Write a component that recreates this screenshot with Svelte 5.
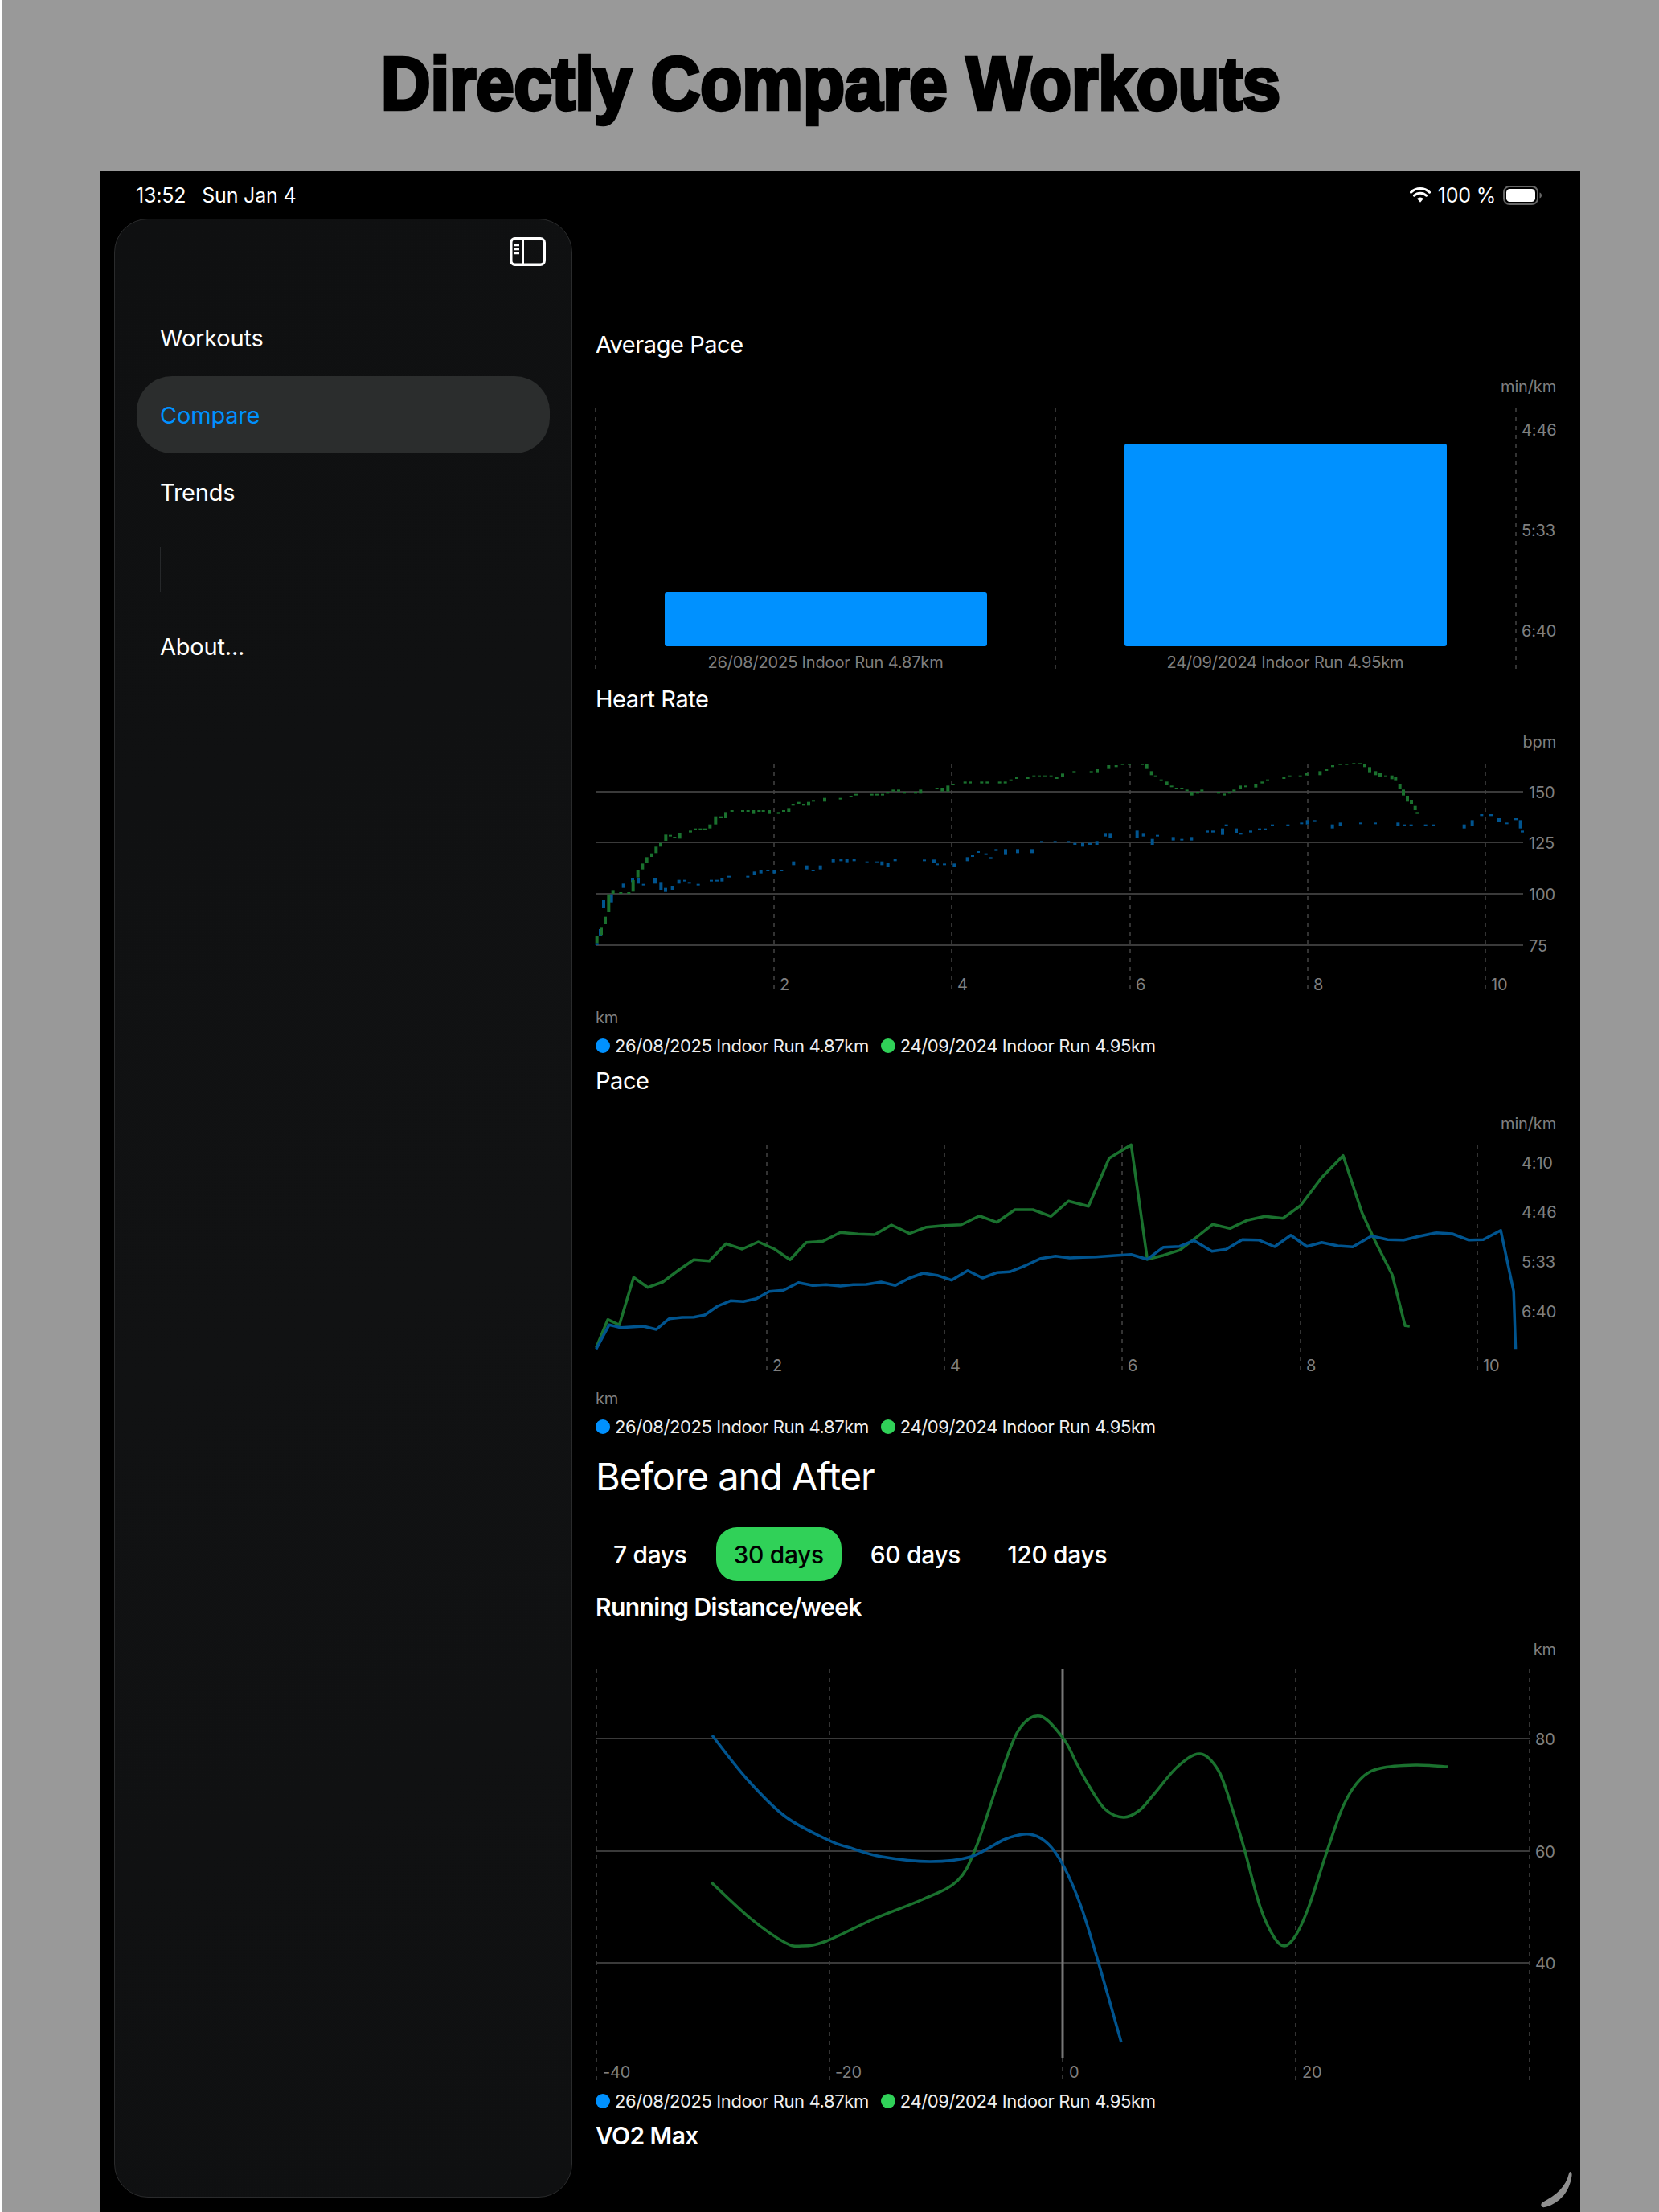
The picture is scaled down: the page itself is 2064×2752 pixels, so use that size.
<script lang="ts">
  type Pt = [number, number];
  type Tick = [number, number, number];

  const sideNav = ['Workouts', 'Compare', 'Trends', '', 'About...'];
  const ranges = ['7 days', '30 days', '60 days', '120 days'];
  const workoutA = '26/08/2025 Indoor Run 4.87km';
  const workoutB = '24/09/2024 Indoor Run 4.95km';

  // points were traced from a crop, so they come with the crop's origin and scale
  const traced = (pts: Pt[], x0: number, sx: number, y0: number, sy: number): Pt[] =>
    pts.map(([h, v]) => [x0 + h / sx, y0 + v / sy]);

  const ticks = (rows: Tick[], x0: number, y0: number): Tick[] =>
    rows.map(([h, a, b]) => [x0 + h / 3, y0 + a / 3, (b - a) / 3]);

  function linePath(pts: Pt[]) {
    return pts.map(([x, y], i) => `${i ? 'L' : 'M'}${x.toFixed(1)} ${y.toFixed(1)}`).join(' ');
  }

  // Catmull-Rom, the charts use a smooth interpolation for the before/after curves
  function smoothPath(pts: Pt[]) {
    let d = `M${pts[0][0]} ${pts[0][1]}`;
    for (let i = 0; i < pts.length - 1; i++) {
      const p0 = pts[i - 1] ?? pts[i];
      const p1 = pts[i];
      const p2 = pts[i + 1];
      const p3 = pts[i + 2] ?? p2;
      const c1x = p1[0] + (p2[0] - p0[0]) / 6;
      const c1y = p1[1] + (p2[1] - p0[1]) / 6;
      const c2x = p2[0] - (p3[0] - p1[0]) / 6;
      const c2y = p2[1] - (p3[1] - p1[1]) / 6;
      d += ` C${c1x.toFixed(1)} ${c1y.toFixed(1)} ${c2x.toFixed(1)} ${c2y.toFixed(1)} ${p2[0]} ${p2[1]}`;
    }
    return d;
  }

  const hrGreen: Tick[] = [
    ...ticks([[68,793,820],[84,760,790],[99,722,750],[112,638,705],[128,622,636],[157,630,636],[187,630,636],[203,585,628],[221,546,575],[238,523,545],[254,499,522],[273,485,498],[289,460,484],[306,446,460],[325,415,438],[342,416,422],[358,423,429],[377,408,430],[417,400,407],[435,392,399],[454,392,399],[471,392,399],[490,377,392],[511,347,377],[531,347,354],[549,331,354],[572,324,330],[612,324,330],[632,324,330],[652,324,338],[673,324,330],[689,324,330],[711,324,338],[746,331,338],[765,324,330],[784,316,330],[800,300,307],[821,293,300],[840,300,307],[858,293,307],[876,286,292],[918,278,292],[977,278,284],[1016,270,276],[1035,263,269],[1094,263,269],[1113,263,269],[1134,263,269],[1153,255,262],[1174,247,254],[1194,247,254],[1215,255,262],[1257,255,262]], 720, 900),
    ...ticks([[76,127,142],[137,120,126],[157,120,134],[178,112,134],[197,105,111],[242,97,104],[261,97,104],[304,97,104],[325,97,104],[371,97,104],[392,97,104],[413,89,95],[435,81,87],[476,81,87],[499,74,80],[519,74,80],[540,74,80],[563,74,80],[584,81,87],[606,67,81],[649,58,65],[713,58,65],[735,51,65],[778,36,50],[806,36,43],[830,30,35],[855,30,35],[903,30,35],[920,30,50],[938,58,73],[953,74,80],[974,89,95],[995,97,111],[1013,112,118],[1031,120,126],[1051,120,126],[1070,127,133],[1088,135,149],[1110,135,142],[1126,127,134],[1188,135,142]], 1120, 940),
    ...ticks([[39,142,149],[59,135,142],[76,127,134],[99,112,126],[120,112,118],[157,105,119],[181,97,104],[201,89,95],[262,81,87],[284,74,80],[323,74,80],[347,66,74],[397,58,73],[421,51,57],[444,36,43],[472,30,35],[496,30,35],[523,28,31],[546,28,31],[564,30,43],[582,43,65],[604,58,73],[621,66,81],[642,74,80],[665,74,88],[679,81,95],[695,105,126],[708,127,149],[723,150,172],[738,165,180],[752,188,204],[760,211,218]], 1510, 940)
  ];

  const hrBlue: Tick[] = [
    ...ticks([[68,820,828],[81,768,792],[93,660,690],[122,638,668],[167,598,614],[201,576,592],[222,576,598],[242,599,605],[285,576,598],[307,592,621],[324,614,629],[350,606,621],[374,584,598],[396,584,590],[413,592,598],[446,599,605],[495,584,590],[516,584,590],[535,576,590],[561,569,575],[631,569,575],[656,553,567],[680,546,560],[706,546,552],[730,546,560],[757,546,552],[802,515,529],[851,530,545],[875,546,552],[902,530,545],[950,507,521],[979,507,514],[1001,507,521],[1028,507,514],[1076,515,521],[1113,515,521],[1132,515,529],[1154,522,537],[1181,507,514]], 720, 900),
    ...ticks([[90,388,394],[126,388,402],[138,403,409],[165,403,409],[202,403,417],[251,379,394],[270,372,378],[291,357,363],[320,365,371],[338,379,386],[358,349,356],[393,349,371],[438,349,364],[492,349,364],[528,319,325],[578,319,325],[628,319,325],[652,326,333],[681,326,340],[708,326,333],[734,319,333],[765,289,302],[784,289,309],[884,280,309],[908,289,302],[941,311,333],[960,296,302],[1019,304,317],[1051,311,317],[1087,304,317],[1146,280,287],[1167,280,287]], 1120, 940),
    ...ticks([[33,272,296],[47,257,264],[84,272,288],[101,288,295],[138,280,287],[171,272,279],[192,272,279],[219,257,264],[277,257,264],[328,250,256],[350,241,257],[377,241,248],[443,257,272],[473,250,264],[549,250,256],[603,250,256],[688,250,264],[711,257,264],[737,257,264],[791,257,264],[819,257,264],[935,257,272],[965,241,264],[1000,219,226],[1035,219,226],[1065,234,249],[1094,250,256],[1128,234,241],[1145,241,272],[1152,280,287]], 1510, 940)
  ];

  const paceGreen = traced([[27,1040],[45,935],[63,955],[85,778],[107,815],[130,795],[155,750],[178,712],[202,716],[228,652],[253,672],[278,645],[303,672],[327,712],[352,647],[378,643],[405,610],[432,616],[458,618],[484,582],[512,614],[538,590],[565,584],[592,581],[620,548],[647,572],[675,525],[703,525],[731,550],[758,493],[789,512],[821,333],[855,283],[880,710],[905,695],[930,676],[955,630],[981,580],[1008,595],[1034,565],[1062,550],[1090,557],[1117,510],[1150,405],[1183,323],[1212,535],[1232,640],[1259,768],[1279,958],[1286,960]], 720, 1.244, 1330, 3);

  const paceBlue = traced([[27,1045],[47,955],[65,965],[100,960],[120,972],[140,932],[160,927],[178,926],[195,918],[215,885],[235,865],[255,868],[275,857],[295,830],[317,826],[340,797],[362,808],[383,805],[405,810],[425,805],[445,804],[468,795],[490,808],[512,780],[533,762],[555,770],[577,788],[602,752],[625,780],[647,760],[667,757],[690,735],[715,707],[738,698],[760,705],[780,703],[800,701],[830,696],[855,692],[880,710],[905,665],[930,662],[952,640],[980,680],[1002,673],[1027,637],[1052,638],[1077,663],[1102,620],[1127,662],[1150,647],[1175,660],[1198,664],[1227,623],[1252,637],[1277,638],[1300,625],[1327,611],[1352,615],[1377,638],[1400,637],[1427,602],[1447,830],[1450,1045]], 720, 1.244, 1330, 3);

  const distGreen: Pt[] = [[885,2342],[934,2387],[977,2417],[998,2421],[1028,2415],[1088,2387],[1148,2363],[1191,2340],[1214,2299],[1242,2217],[1267,2153],[1294,2135],[1323,2163],[1340,2195],[1355,2222],[1375,2251],[1398,2261],[1418,2252],[1435,2233],[1465,2198],[1493,2182],[1516,2203],[1533,2250],[1548,2300],[1568,2373],[1585,2410],[1598,2421],[1612,2408],[1628,2373],[1652,2300],[1672,2245],[1693,2213],[1717,2200],[1761,2196],[1801,2198]];
  const distBlue: Pt[] = [[886,2159],[929,2213],[977,2260],[1032,2290],[1058,2299],[1097,2310],[1157,2316],[1208,2310],[1251,2288],[1281,2282],[1304,2294],[1324,2323],[1345,2372],[1367,2443],[1395,2541]];

  const hrX = [[963, '2'], [1184, '4'], [1406, '6'], [1627, '8'], [1848, '10']];
  const paceX = [[954, '2'], [1175, '4'], [1396, '6'], [1618, '8'], [1838, '10']];
</script>

{#snippet legend()}
  <div class="legend">
    <span class="dot blue"></span><span>{workoutA}</span>
    <span class="dot green"></span><span>{workoutB}</span>
  </div>
{/snippet}

{#snippet vgrid(x, top, bottom)}
  <line class="grid" x1={x} x2={x} y1={top} y2={bottom} />
{/snippet}

{#snippet hgrid(y, right, label)}
  <line class="rule" x1="741" x2={right} y1={y} y2={y} />
  <text class="axis" x={right + 7} y={y + 1}>{label}</text>
{/snippet}

<div class="page">
  <h1 class="headline"><span>Directly Compare Workouts</span></h1>

  <div class="tablet">
    <div class="status">
      <div class="clock"><span>13:52</span><span>Sun Jan 4</span></div>
      <div class="indicators">
        <svg class="wifi" viewBox="0 0 26 21" width="26" height="21">
          <path d="M1.5 7.2a16.5 16.5 0 0 1 23 0M5.5 11.2a10.8 10.8 0 0 1 15 0" fill="none" stroke="#fff" stroke-width="3" stroke-linecap="round" />
          <path d="M9 15a6 6 0 0 1 8 0l-4 4.8z" fill="#fff" />
        </svg>
        <span>100 %</span>
        <svg class="battery" viewBox="0 0 49 24" width="49" height="24">
          <rect x="1" y="1" width="42" height="22" rx="7" fill="none" stroke="#666" stroke-width="2" />
          <rect x="4" y="4" width="36" height="16" rx="4.5" fill="#fff" />
          <path d="M45.5 8.5c1.8.6 2.5 2 2.5 3.5s-.7 2.900-2.500 3.500z" fill="#666" />
        </svg>
      </div>
    </div>

    <div class="split">
      <aside class="sidebar">
        <div class="side-head">
          <svg viewBox="0 0 45 36" width="45" height="36" fill="none" stroke="#fff">
            <rect x="1.750" y="1.750" width="41.500" height="32.500" rx="5" stroke-width="3.500" />
            <path d="M16.500 2v32" stroke-width="3" />
            <path d="M6 10h6M6 15h6M6 20h6" stroke-width="2.400" />
          </svg>
        </div>
        <nav>
          {#each sideNav as item}
            {#if item}
              <div class="nav-row" class:selected={item === 'Compare'}>{item}</div>
            {:else}
              <div class="nav-row"><span class="nav-rule"></span></div>
            {/if}
          {/each}
        </nav>
      </aside>

      <main>
        <h3>Average Pace</h3>
        <svg class="chart" viewBox="741 449 1200 401" width="1200" height="401">
          <text class="axis end" x="1936" y="481">min/km</text>
          {@render vgrid(741, 508, 835)}
          {@render vgrid(1313, 508, 835)}
          {@render vgrid(1886, 508, 835)}
          <rect class="bar" x="827" y="737" width="401" height="67" rx="3" />
          <rect class="bar" x="1399" y="552" width="401" height="252" rx="3" />
          <text class="axis mid" x="1027" y="824">{workoutA}</text>
          <text class="axis mid" x="1599" y="824">{workoutB}</text>
          <text class="axis" x="1893" y="535">4:46</text>
          <text class="axis" x="1893" y="660">5:33</text>
          <text class="axis" x="1893" y="785">6:40</text>
        </svg>

        <h3>Heart Rate</h3>
        <svg class="chart" viewBox="741 890 1200 396" width="1200" height="396">
          <text class="axis end" x="1936" y="923">bpm</text>
          {@render hgrid(985, 1895, '150')}
          {@render hgrid(1048, 1895, '125')}
          {@render hgrid(1112, 1895, '100')}
          {@render hgrid(1176, 1895, '75')}
          {#each hrX as [x, label]}
            {@render vgrid(x, 950, 1232)}
            <text class="axis" x={+x + 7} y="1225">{label}</text>
          {/each}
          {#each hrBlue as [x, y, h]}
            <rect class="tick-blue" x={x - 2} {y} width="4" height={h} />
          {/each}
          {#each hrGreen as [x, y, h]}
            <rect class="tick-green" x={x - 2} {y} width="4" height={h} />
          {/each}
          <text class="axis" x="741" y="1266">km</text>
        </svg>
        {@render legend()}

        <h3 class="after-legend">Pace</h3>
        <svg class="chart" viewBox="741 1365 1200 395" width="1200" height="395">
          <text class="axis end" x="1936" y="1398">min/km</text>
          {#each paceX as [x, label]}
            {@render vgrid(x, 1424, 1707)}
            <text class="axis" x={+x + 7} y="1699">{label}</text>
          {/each}
          <text class="axis" x="1893" y="1447">4:10</text>
          <text class="axis" x="1893" y="1508">4:46</text>
          <text class="axis" x="1893" y="1570">5:33</text>
          <text class="axis" x="1893" y="1632">6:40</text>
          <path class="line-green" d={linePath(paceGreen)} />
          <path class="line-blue" d={linePath(paceBlue)} />
          <text class="axis" x="741" y="1740">km</text>
        </svg>
        {@render legend()}

        <h2>Before and After</h2>
        <div class="ranges">
          {#each ranges as range}
            <div class="range" class:active={range === '30 days'}>{range}</div>
          {/each}
        </div>

        <h4>Running Distance/week</h4>
        <svg class="chart" viewBox="741 2019 1200 580" width="1200" height="580">
          <text class="axis end" x="1936" y="2052">km</text>
          {@render vgrid(742, 2077, 2591)}
          {@render vgrid(1032, 2077, 2591)}
          {@render vgrid(1322, 2560, 2591)}
          {@render vgrid(1612, 2077, 2591)}
          {@render vgrid(1903, 2077, 2591)}
          {@render hgrid(2163, 1903, '80')}
          {@render hgrid(2303, 1903, '60')}
          {@render hgrid(2442, 1903, '40')}
          <line class="zero" x1="1322" x2="1322" y1="2077" y2="2560" />
          <path class="line-green" d={smoothPath(distGreen)} />
          <path class="line-blue" d={smoothPath(distBlue)} />
          <text class="axis" x="750" y="2578">-40</text>
          <text class="axis" x="1039" y="2578">-20</text>
          <text class="axis" x="1330" y="2578">0</text>
          <text class="axis" x="1620" y="2578">20</text>
        </svg>
        {@render legend()}

        <h4 class="after-legend">VO2 Max</h4>
      </main>
    </div>

    <svg class="corner" viewBox="0 0 44 46" width="44" height="46">
      <path d="M39 1C41 1 42 3 41.500 6C39 24 28 40 8 45C3 46 2 41 5 39C22 30 34 20 38 3Z" fill="#8f8f8f" />
    </svg>
  </div>
</div>

<style>
  :global(body) {
    margin: 0;
    background: #fff;
  }

  .page {
    margin-left: 3px;
    height: 2752px;
    background: #999;
    overflow: hidden;
    font-family: Inter, "Liberation Sans", sans-serif;
  }

  .headline {
    margin: 0;
    height: 213px;
    padding-top: 49px;
    box-sizing: border-box;
    text-align: center;
    font-family: "Liberation Sans", Arial, sans-serif;
    font-size: 93px;
    line-height: 110px;
    font-weight: 700;
    color: #000;
    white-space: nowrap;
  }

  .headline span {
    display: inline-block;
    transform: scaleX(0.915);
    -webkit-text-stroke: 4.500px #000;
  }

  .tablet {
    position: relative;
    margin-left: 121px;
    width: 1842px;
    height: 2539px;
    background: #000;
    color: #fff;
    overflow: hidden;
  }

  .status {
    height: 59px;
    padding: 0 47px 0 45px;
    display: flex;
    align-items: center;
    justify-content: space-between;
    font-size: 25px;
    letter-spacing: -0.2px;
  }

  .clock {
    display: flex;
    gap: 20px;
  }

  .indicators {
    display: flex;
    align-items: center;
    gap: 9px;
  }

  .split {
    display: flex;
    gap: 29px;
    padding-left: 18px;
  }

  .sidebar {
    width: 570px;
    height: 2462px;
    flex: none;
    box-sizing: border-box;
    border: 1.500px solid #2a2b2c;
    border-radius: 42px;
    background: linear-gradient(160deg, #0f1011, #111213 55%, #0f1011);
    padding: 22px 27px 0;
  }

  .side-head {
    display: flex;
    justify-content: flex-end;
    padding-right: 5px;
    height: 36px;
  }

  nav {
    margin-top: 41px;
    display: flex;
    flex-direction: column;
  }

  .nav-row {
    height: 96px;
    padding: 0 29px;
    display: flex;
    align-items: center;
    font-size: 29px;
    letter-spacing: -0.2px;
    border-radius: 44px;
  }

  .nav-row.selected {
    background: #2b2d2d;
    color: #0091ff;
  }

  .nav-rule {
    width: 1px;
    height: 55px;
    background: #26282a;
  }

  main {
    width: 1200px;
    padding-top: 137px;
    display: flex;
    flex-direction: column;
    align-items: flex-start;
  }

  h3,
  h4 {
    margin: 0;
    font-size: 29px;
    line-height: 40px;
    font-weight: 400;
    letter-spacing: -0.45px;
  }

  h4 {
    margin-top: 12px;
    font-size: 30px;
    font-weight: 600;
    letter-spacing: -0.6px;
  }

  h3.after-legend {
    margin-top: 9px;
  }

  h4.after-legend {
    margin-top: 8px;
  }

  h2 {
    margin: 17px 0 0;
    font-size: 47px;
    line-height: 60px;
    font-weight: 400;
    letter-spacing: -1.1px;
  }

  .ranges {
    margin-top: 33px;
    display: flex;
    gap: 14px;
  }

  .range {
    height: 67px;
    padding: 0 22px;
    display: flex;
    align-items: center;
    font-size: 30px;
    font-weight: 500;
    letter-spacing: -0.35px;
    border-radius: 26px;
  }

  .range.active {
    background: #30d158;
    color: #000;
  }

  .chart {
    display: block;
    overflow: visible;
  }

  .legend {
    height: 30px;
    display: flex;
    align-items: center;
    font-size: 22px;
    letter-spacing: -0.4px;
    color: #eee;
  }

  .dot {
    width: 18px;
    height: 18px;
    border-radius: 50%;
    margin-right: 6px;
  }

  .dot.blue {
    background: #0091ff;
  }

  .dot.green {
    background: #30d158;
    margin-left: 15px;
  }

  .axis {
    fill: #7f7f7f;
    font-size: 20px;
    letter-spacing: -0.15px;
    dominant-baseline: central;
  }

  .axis.end {
    text-anchor: end;
  }

  .axis.mid {
    text-anchor: middle;
  }

  .grid {
    stroke: #444;
    stroke-width: 1.500;
    stroke-dasharray: 5 6;
  }

  .rule {
    stroke: #3a3a3a;
    stroke-width: 2;
  }

  .zero {
    stroke: #777;
    stroke-width: 3;
  }

  .bar {
    fill: #0091ff;
  }

  .tick-green {
    fill: #1a712e;
  }

  .tick-blue {
    fill: #00548f;
  }

  .line-green,
  .line-blue {
    fill: none;
    stroke-width: 3.500;
    stroke-linejoin: round;
  }

  .line-green {
    stroke: #1a712e;
  }

  .line-blue {
    stroke: #00548f;
  }

  .corner {
    position: absolute;
    right: 8px;
    bottom: 5px;
  }
</style>
